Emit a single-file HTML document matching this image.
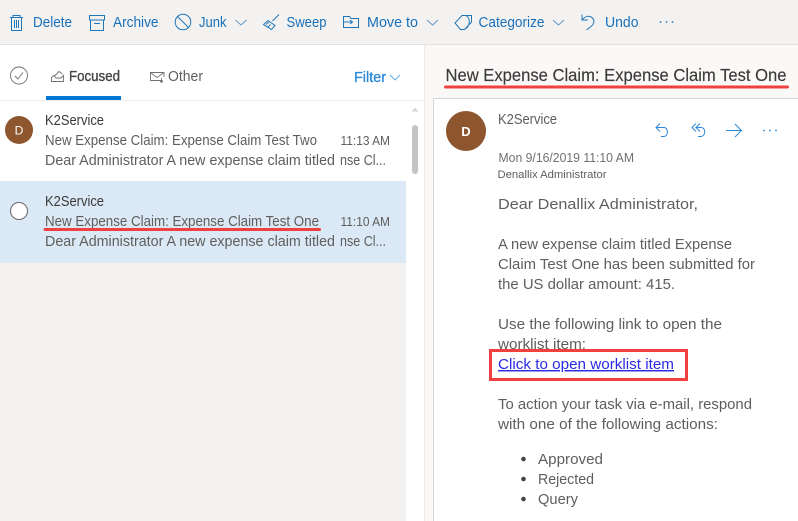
<!DOCTYPE html>
<html><head><meta charset="utf-8"><style>
html,body{margin:0;padding:0;width:798px;height:521px;overflow:hidden;background:#fff}
svg{display:block}
text{font-family:"Liberation Sans",sans-serif;font-size:14.6px;fill:#4a4a4a}
.b{fill:#1a70b8}.t{fill:#5f5e5c}.k{fill:#3b3a39}
.ic{fill:none;stroke:#2176b8;stroke-width:1}
.ch{fill:none;stroke:#5a95c8;stroke-width:.9}
.ib{fill:none;stroke:#2b88d8;stroke-width:1}
.ig{fill:none;stroke:#707070;stroke-width:.9}
</style></head><body>
<svg width="798" height="521" viewBox="0 0 798 521" xmlns="http://www.w3.org/2000/svg">
<!-- backgrounds -->
<rect width="798" height="521" fill="#faf9f8"/>
<rect width="798" height="45" fill="#f3f2f1"/>
<rect y="44" width="798" height="1" fill="#e4e2e0"/>
<rect y="45" width="424" height="476" fill="#fff"/>
<rect y="263" width="406" height="258" fill="#f3f2f1"/>
<rect x="0" y="100" width="424" height="1" fill="#edebe9"/>
<rect x="424" y="45" width="1" height="476" fill="#edebe9"/>
<rect x="0" y="181" width="406" height="82" fill="#dbe9f6"/>
<!-- card -->
<rect x="433.5" y="98.5" width="370" height="430" fill="#fff" stroke="#d8d6d3"/>

<!-- toolbar icons -->
<path class="ic" d="M10 17.5H23M13 17.5V15.5H20V17.5M11.5 17.5V30.5H21.5V17.5M14.5 20V28M16.5 20V28M18.5 20V28"/>
<path class="ic" d="M89.5 15.5H104.5V20H89.5ZM90.5 20V30.5H103.5V20M94 23.5H100"/>
<circle class="ic" cx="183" cy="22" r="7.8"/><path class="ic" d="M177.5 16.5L188.5 27.5"/>
<path class="ch" d="M235.5 20L241 25L246.5 20"/>
<path class="ic" d="M279 14.5L272.5 21M268 20.5L275 25.5L271.5 29.5L263.5 24.5ZM266 24.5L269 22M268 27L270.5 24.5"/>
<path class="ic" d="M343.5 16.5H349.5L351 18.5H358.5V27.5H343.5ZM343.5 22H352M350 20L352.5 22L350 24"/>
<path class="ch" d="M427 20L432.5 25L438 20"/>
<path class="ic" d="M455 23L462 15.5H471.5V22L464.5 29.5H460.5ZM466 15.5C470.5 18 470.5 26 465 29"/>
<path class="ch" d="M553 20L558.5 25L564 20"/>
<path class="ic" d="M582 14.5V20H588M582.5 19.5C586 15.5 590 15.5 592.5 18C595 21 594 24 591 26.5L586.5 30"/>
<circle cx="660.5" cy="22" r=".9" fill="#2176b8"/><circle cx="666.5" cy="22" r=".9" fill="#2176b8"/><circle cx="672.5" cy="22" r=".9" fill="#2176b8"/>

<!-- toolbar text -->
<text class="b" x="33" y="27" textLength="39" lengthAdjust="spacingAndGlyphs">Delete</text>
<text class="b" x="113" y="27" textLength="45.5" lengthAdjust="spacingAndGlyphs">Archive</text>
<text class="b" x="199" y="27" textLength="27.5" lengthAdjust="spacingAndGlyphs">Junk</text>
<text class="b" x="286.5" y="27" textLength="40" lengthAdjust="spacingAndGlyphs">Sweep</text>
<text class="b" x="367" y="27" textLength="51" lengthAdjust="spacingAndGlyphs">Move to</text>
<text class="b" x="478.5" y="27" textLength="66" lengthAdjust="spacingAndGlyphs">Categorize</text>
<text class="b" x="605" y="27" textLength="33.5" lengthAdjust="spacingAndGlyphs">Undo</text>

<!-- focus bar -->
<circle class="ig" cx="19" cy="75.5" r="8.5"/>
<path class="ig" d="M15 76L18 79L23 72.5"/>
<path class="ig" d="M51.5 81.5V77.5L54 75.5L56 78H61L63.5 75.5L63.5 81.5ZM54.5 76L59 71.5L62.5 74"/>
<text x="69" y="81" textLength="51" lengthAdjust="spacingAndGlyphs" style="fill:#444;stroke:#444;stroke-width:.35">Focused</text>
<rect x="46" y="96" width="75" height="4" fill="#0078d4"/>
<path class="ig" d="M162.5 80.5H150.5V72.5H164V77M150.5 72.5L157 77.5L164 72.5M161.5 78V82.5M160 81L161.5 82.5L163 81"/>
<text class="t" x="168" y="81" textLength="35" lengthAdjust="spacingAndGlyphs">Other</text>
<text x="354" y="82" textLength="32" lengthAdjust="spacingAndGlyphs" style="fill:#2b88d8;stroke:#2b88d8;stroke-width:.3">Filter</text>
<path d="M390 75L395 80L400 75" fill="none" stroke="#5aa5e0" stroke-width=".9"/>

<!-- title -->
<text x="445.5" y="81" textLength="341" lengthAdjust="spacingAndGlyphs" style="font-size:17.2px;fill:#3b3a39;stroke:#3b3a39;stroke-width:.15">New Expense Claim: Expense Claim Test One</text>
<rect x="444" y="85.5" width="345" height="3" rx="1.5" fill="#f04040"/>

<!-- list row 1 -->
<circle cx="19" cy="130" r="14" fill="#8e562e"/>
<text x="19" y="134.5" text-anchor="middle" style="font-size:12px;fill:#fff">D</text>
<text class="k" x="45" y="125" textLength="59" lengthAdjust="spacingAndGlyphs">K2Service</text>
<text class="t" x="45" y="145" textLength="272" lengthAdjust="spacingAndGlyphs">New Expense Claim: Expense Claim Test Two</text>
<text class="t" x="340.5" y="145" textLength="49.5" lengthAdjust="spacingAndGlyphs" style="font-size:13px">11:13 AM</text>
<text class="t" x="45" y="165" textLength="290" lengthAdjust="spacingAndGlyphs">Dear Administrator A new expense claim titled</text>
<text class="t" x="340" y="165" textLength="46" lengthAdjust="spacingAndGlyphs">nse Cl...</text>

<!-- list row 2 -->
<circle cx="19" cy="211" r="8.5" fill="#fff" stroke="#666" stroke-width="1"/>
<text class="k" x="45" y="206" textLength="59" lengthAdjust="spacingAndGlyphs">K2Service</text>
<text class="t" x="45" y="226" textLength="274" lengthAdjust="spacingAndGlyphs">New Expense Claim: Expense Claim Test One</text>
<text class="t" x="340.5" y="226" textLength="49.5" lengthAdjust="spacingAndGlyphs" style="font-size:13px">11:10 AM</text>
<text class="t" x="45" y="246" textLength="290" lengthAdjust="spacingAndGlyphs">Dear Administrator A new expense claim titled</text>
<text class="t" x="340" y="246" textLength="46" lengthAdjust="spacingAndGlyphs">nse Cl...</text>
<rect x="43.5" y="228" width="277.5" height="3" rx="1.5" fill="#f04040"/>

<!-- scrollbar -->
<path d="M411.5 111.5L415 107.5L418.5 111.5Z" fill="#d8d8d8"/>
<rect x="412" y="125" width="6" height="49" rx="3" fill="#c4c4c4"/>

<!-- email header -->
<circle cx="466" cy="131" r="20" fill="#8e562e"/>
<text x="466" y="136" text-anchor="middle" font-weight="bold" style="font-size:13px;fill:#fff">D</text>
<text class="t" x="498" y="124" textLength="59" lengthAdjust="spacingAndGlyphs">K2Service</text>
<path class="ib" d="M660 123.5L656 127.5L660 131.5M656 127.5H664C668.5 127.5 668.5 136 664 136.5H661"/>
<path class="ib" d="M696 123.5L692 127.5L696 131.5M700 123.5L696 127.5L700 131.5M696 127.5H701C706 127.5 706 136 701 136.5H698"/>
<path class="ib" d="M726 130.5H741.5M735 124L741.5 130.5L735 137" stroke-width="1.3"/>
<circle cx="764" cy="130.5" r=".9" fill="#2b88d8"/><circle cx="770" cy="130.5" r=".9" fill="#2b88d8"/><circle cx="776" cy="130.5" r=".9" fill="#2b88d8"/>
<text class="t" x="498.5" y="162" textLength="135.5" lengthAdjust="spacingAndGlyphs" style="font-size:12.6px;fill:#707070">Mon 9/16/2019 11:10 AM</text>
<text class="t" x="497.5" y="178" textLength="109" lengthAdjust="spacingAndGlyphs" style="font-size:11px">Denallix Administrator</text>

<!-- email body -->
<text class="t" x="498" y="209" textLength="200" lengthAdjust="spacingAndGlyphs">Dear Denallix Administrator,</text>
<text class="t" x="498" y="249" textLength="234" lengthAdjust="spacingAndGlyphs">A new expense claim titled Expense</text>
<text class="t" x="498" y="269" textLength="257" lengthAdjust="spacingAndGlyphs">Claim Test One has been submitted for</text>
<text class="t" x="498" y="289" textLength="177" lengthAdjust="spacingAndGlyphs">the US dollar amount: 415.</text>
<text class="t" x="498" y="329" textLength="224" lengthAdjust="spacingAndGlyphs">Use the following link to open the</text>
<text class="t" x="498" y="349" textLength="88" lengthAdjust="spacingAndGlyphs">worklist item:</text>
<rect x="490.5" y="350.5" width="196" height="29" fill="#fff" stroke="#f04040" stroke-width="3"/>
<text x="498" y="369" textLength="176" lengthAdjust="spacingAndGlyphs" style="fill:#2a2ae6;text-decoration:underline">Click to open worklist item</text>
<text class="t" x="498" y="409" textLength="254" lengthAdjust="spacingAndGlyphs">To action your task via e-mail, respond</text>
<text class="t" x="498" y="429" textLength="220" lengthAdjust="spacingAndGlyphs">with one of the following actions:</text>
<circle cx="523.5" cy="459" r="2.3" fill="#444"/>
<circle cx="523.5" cy="479" r="2.3" fill="#444"/>
<circle cx="523.5" cy="499" r="2.3" fill="#444"/>
<text class="t" x="538" y="464" textLength="65" lengthAdjust="spacingAndGlyphs">Approved</text>
<text class="t" x="538" y="484" textLength="56" lengthAdjust="spacingAndGlyphs">Rejected</text>
<text class="t" x="538" y="504" textLength="40" lengthAdjust="spacingAndGlyphs">Query</text>
</svg>
</body></html>
